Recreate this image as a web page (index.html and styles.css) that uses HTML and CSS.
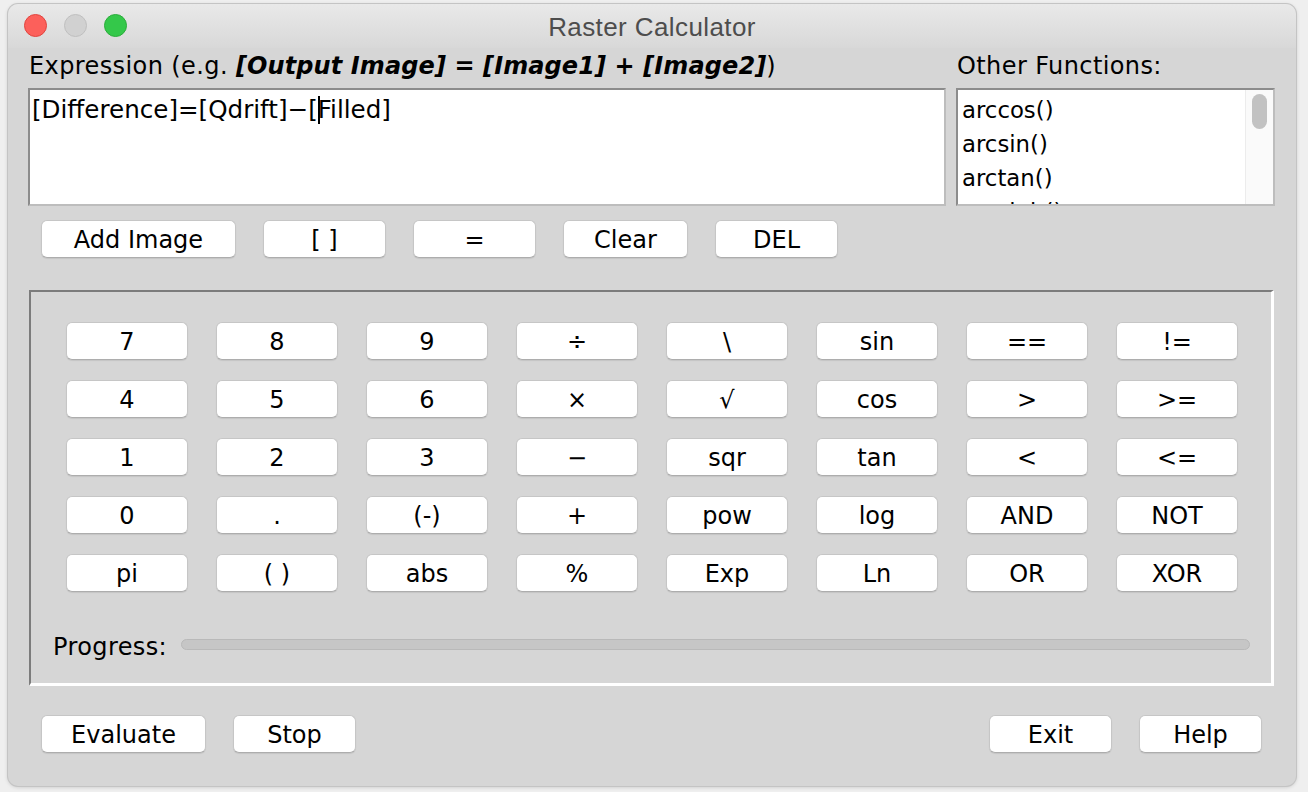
FILE: index.html
```html
<!DOCTYPE html>
<html>
<head>
<meta charset="utf-8">
<link rel="stylesheet" href="styles.css">
</head>
<body>
<div class="window">
  <div class="titlebar">
    <div class="lights">
      <span class="light red"></span>
      <span class="light gray"></span>
      <span class="light green"></span>
    </div>
    <div class="title">Raster Calculator</div>
  </div>
  <div class="content">
    <div class="top">
      <div class="expr-col">
        <div class="label">Expression (e.g. <b><i>[Output Image]</i> = <i>[Image1]</i> + <i>[Image2]</i></b>)</div>
        <div class="field">[Difference]=[Qdrift]−[<span class="caret"></span>Filled]</div>
      </div>
      <div class="func-col">
        <div class="label">Other Functions:</div>
        <div class="list">
          <div class="items">
            <div class="item">arccos()</div>
            <div class="item">arcsin()</div>
            <div class="item">arctan()</div>
            <div class="item">arcsinh()</div>
          </div>
          <div class="scroll"><div class="thumb"></div></div>
        </div>
      </div>
    </div>
    <div class="btnrow">
      <button class="btn w195">Add Image</button>
      <button class="btn">[ ]</button>
      <button class="btn">=</button>
      <button class="btn w125">Clear</button>
      <button class="btn">DEL</button>
    </div>
    <div class="panel">
      <div class="grid">
        <button class="btn">7</button><button class="btn">8</button><button class="btn">9</button><button class="btn">÷</button><button class="btn">\</button><button class="btn">sin</button><button class="btn">==</button><button class="btn">!=</button>
        <button class="btn">4</button><button class="btn">5</button><button class="btn">6</button><button class="btn">×</button><button class="btn">√</button><button class="btn">cos</button><button class="btn">&gt;</button><button class="btn">&gt;=</button>
        <button class="btn">1</button><button class="btn">2</button><button class="btn">3</button><button class="btn">−</button><button class="btn">sqr</button><button class="btn">tan</button><button class="btn">&lt;</button><button class="btn">&lt;=</button>
        <button class="btn">0</button><button class="btn">.</button><button class="btn">(-)</button><button class="btn">+</button><button class="btn">pow</button><button class="btn">log</button><button class="btn">AND</button><button class="btn">NOT</button>
        <button class="btn">pi</button><button class="btn">( )</button><button class="btn">abs</button><button class="btn">%</button><button class="btn">Exp</button><button class="btn">Ln</button><button class="btn">OR</button><button class="btn">XOR</button>
      </div>
      <div class="progress">
        <span class="plabel">Progress:</span>
        <div class="bar"></div>
      </div>
    </div>
    <div class="bottom">
      <div class="group">
        <button class="btn w165">Evaluate</button>
        <button class="btn">Stop</button>
      </div>
      <div class="group">
        <button class="btn">Exit</button>
        <button class="btn">Help</button>
      </div>
    </div>
  </div>
</div>
</body>
</html>
```
FILE: styles.css
```css
html, body {
  margin: 0;
  padding: 0;
}
body {
  width: 1308px;
  height: 792px;
  background: #efefef;
  font-family: "DejaVu Sans", "Liberation Sans", sans-serif;
  color: #000;
  overflow: hidden;
  padding: 4px 0 0 8px;
  box-sizing: border-box;
}
.window {
  width: 1288px;
  height: 782px;
  border-radius: 10px;
  background: #d6d6d6;
  box-shadow: 0 0 0 1px #c4c4c4, 0 1px 4px rgba(0,0,0,0.18);
  overflow: hidden;
  display: flex;
  flex-direction: column;
}
.titlebar {
  height: 44px;
  flex: none;
  background: linear-gradient(#e9e9e9, #d8d8d8);
  display: flex;
  align-items: center;
  position: relative;
}
.lights {
  display: flex;
  gap: 17px;
  padding-left: 16px;
  margin-top: -1px;
}
.light {
  width: 23px;
  height: 23px;
  border-radius: 50%;
  box-sizing: border-box;
}
.light.red { background: #fc605b; border: 1px solid #e0443e; }
.light.gray { background: #d1d1d1; border: 1px solid #bfbfbf; }
.light.green { background: #34c84a; border: 1px solid #2aac3a; }
.title {
  position: absolute;
  left: 0;
  right: 0;
  top: 8px;
  text-align: center;
  font-family: "Liberation Sans", sans-serif;
  font-size: 26px;
  color: #4d4d4d;
  letter-spacing: 0.4px;
}
.content {
  padding: 0 0 0 20px;
  flex: 1;
  display: flex;
  flex-direction: column;
}
.top {
  display: flex;
  gap: 10px;
}
.label {
  font-size: 24px;
  line-height: 26px;
  margin-top: 5px;
  height: 35px;
  white-space: nowrap;
  padding-left: 1px;
  letter-spacing: 0.4px;
}
.label b {
  letter-spacing: 0.1px;
}
.expr-col { width: 918px; }
.func-col { width: 319px; }
.field {
  height: 118px;
  box-sizing: border-box;
  background: #fff;
  border: 2px solid #8c8c8c;
  border-right-color: #bdbdbd;
  border-bottom-color: #bdbdbd;
  font-size: 24.6px;
  line-height: 34px;
  padding: 3px 0 0 2px;
  white-space: nowrap;
}
.caret {
  display: inline-block;
  width: 2px;
  height: 28px;
  background: #000;
  vertical-align: -6px;
  margin-right: -2px;
}
.list {
  height: 118px;
  box-sizing: border-box;
  background: #fff;
  border: 2px solid #8c8c8c;
  border-right-color: #bdbdbd;
  border-bottom-color: #bdbdbd;
  display: flex;
  overflow: hidden;
}
.items {
  flex: 1;
  padding: 3px 0 0 4px;
  font-size: 22.8px;
  line-height: 34px;
}
.scroll {
  width: 28px;
  flex: none;
  background: #fafafa;
  border-left: 1px solid #ececec;
  box-sizing: border-box;
  padding: 4px 0 0 6px;
}
.thumb {
  width: 15px;
  height: 35px;
  border-radius: 8px;
  background: #c2c2c2;
}
.btn {
  width: 123px;
  height: 38px;
  background: #fff;
  border: 1px solid #c6c6c6;
  border-bottom-color: #adadad;
  border-radius: 6px;
  box-shadow: 0 1px 1px rgba(0,0,0,0.08);
  font-family: "DejaVu Sans", sans-serif;
  font-size: 24px;
  color: #000;
  padding: 0;
  margin: 0;
  line-height: 38px;
  text-align: center;
}
.w195 { width: 195px; }
.w125 { width: 125px; }
.w165 { width: 165px; }
.btnrow {
  display: flex;
  gap: 27px;
  padding-left: 13px;
  margin-top: 14px;
}
.panel {
  margin-top: 32px;
  margin-left: 1px;
  width: 1245px;
  height: 396px;
  box-sizing: border-box;
  border-top: 2px solid #7c7c7c;
  border-left: 2px solid #7c7c7c;
  border-right: 3px solid #fff;
  border-bottom: 3px solid #fff;
  padding: 30px 0 0 35px;
}
.grid {
  display: grid;
  grid-template-columns: repeat(8, 122px);
  grid-auto-rows: 38px;
  column-gap: 28px;
  row-gap: 20px;
}
.grid .btn { width: 122px; }
.progress {
  display: flex;
  align-items: center;
  margin-top: 36px;
  margin-left: -13px;
}
.plabel {
  font-size: 24px;
  line-height: 30px;
  width: 128px;
  flex: none;
  padding-top: 4px;
  letter-spacing: 0.4px;
}
.bar {
  width: 1069px;
  height: 11px;
  box-sizing: border-box;
  border-radius: 6px;
  background: #c6c6c6;
  border: 1px solid #b9b9b9;
  margin-top: -2px;
}
.bottom {
  display: flex;
  justify-content: space-between;
  width: 1221px;
  padding-left: 13px;
  margin-top: 29px;
}
.group {
  display: flex;
  gap: 27px;
}
```
